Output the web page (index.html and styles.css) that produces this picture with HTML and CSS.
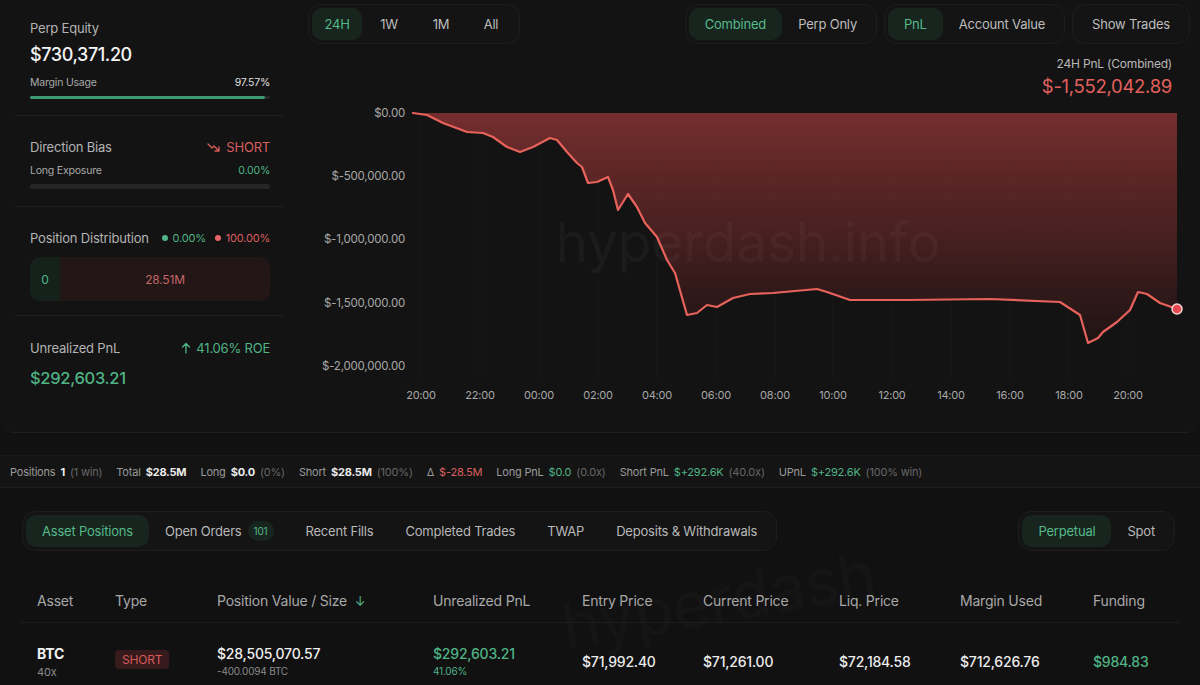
FILE: index.html
```html
<!DOCTYPE html>
<html>
<head>
<meta charset="utf-8">
<link rel="stylesheet" href="styles.css">
</head>
<body>
<div class="top">
  <div class="left">
    <div class="sec s1">
      <div class="lbl">Perp Equity</div>
      <div class="big">$730,371.20</div>
      <div class="row small mt9"><span>Margin Usage</span><span class="white">97.57%</span></div>
      <div class="bar thin"><div class="fill" style="width:98%"></div></div>
    </div>
    <div class="sec s2">
      <div class="row"><span class="lbl">Direction Bias</span><span class="red dir"><svg width="14" height="10" viewBox="0 0 14 10"><path d="M1 2 L5 6 L7 4 L12 9 M8 9 H12 V5" fill="none" stroke="#d45a5a" stroke-width="1.4" stroke-linecap="round" stroke-linejoin="round"/></svg> SHORT</span></div>
      <div class="row small mt9"><span>Long Exposure</span><span class="green">0.00%</span></div>
      <div class="bar thick"></div>
    </div>
    <div class="sec s3">
      <div class="row"><span class="lbl">Position Distribution</span><span class="legend"><i class="dot g"></i><span class="green">0.00%</span><i class="dot r"></i><span class="red">100.00%</span></span></div>
      <div class="dist"><div class="dl">0</div><div class="dr">28.51M</div></div>
    </div>
    <div class="sec s4">
      <div class="row"><span class="lbl">Unrealized PnL</span><span class="green roe"><svg width="10" height="12" viewBox="0 0 10 12"><path d="M5 11 V1.5 M1.5 5 L5 1.5 L8.5 5" fill="none" stroke="#4fb386" stroke-width="1.3" stroke-linecap="round" stroke-linejoin="round"/></svg> 41.06% ROE</span></div>
      <div class="upnl">$292,603.21</div>
    </div>
  </div>
  <div class="chartcol">
    <div class="toolbar">
      <div class="seg">
        <span class="it on w50">24H</span><span class="it w55">1W</span><span class="it w50">1M</span><span class="it w50">All</span>
      </div>
      <div class="rightgroups">
        <div class="seg"><span class="it on">Combined</span><span class="it">Perp Only</span></div>
        <div class="seg"><span class="it on">PnL</span><span class="it">Account Value</span></div>
        <div class="seg"><span class="it">Show Trades</span></div>
      </div>
    </div>
    <div class="summary">
      <div class="sumlbl">24H PnL (Combined)</div>
      <div class="sumval">$-1,552,042.89</div>
    </div>
    <svg class="chart" width="900" height="310" viewBox="0 0 900 310">
      <defs>
        <linearGradient id="gf" x1="0" y1="0" x2="0" y2="1">
          <stop offset="0" stop-color="#7a2f2f" stop-opacity="0.95"/>
          <stop offset="0.6" stop-color="#4a2020" stop-opacity="0.85"/>
          <stop offset="1" stop-color="#2a1515" stop-opacity="0.6"/>
        </linearGradient>
      </defs>
      <g stroke="#ffffff" stroke-opacity="0.025" stroke-width="1">
        <line x1="121" y1="13" x2="121" y2="280"/><line x1="180" y1="13" x2="180" y2="280"/><line x1="239" y1="13" x2="239" y2="280"/><line x1="298" y1="13" x2="298" y2="280"/><line x1="357" y1="13" x2="357" y2="280"/><line x1="416" y1="13" x2="416" y2="280"/><line x1="475" y1="13" x2="475" y2="280"/><line x1="533" y1="13" x2="533" y2="280"/><line x1="592" y1="13" x2="592" y2="280"/><line x1="651" y1="13" x2="651" y2="280"/><line x1="710" y1="13" x2="710" y2="280"/><line x1="769" y1="13" x2="769" y2="280"/><line x1="828" y1="13" x2="828" y2="280"/>
      </g>
      <path fill="url(#gf)" d="M113,13 L127,15 L143,23 L167,32 L183,33 L193,37 L207,47 L220,52 L233,47 L250,38 L257,40 L267,52 L277,63 L282,67 L288,83 L297,82 L308,77 L313,90 L318,110 L328,94 L337,107 L345,123 L357,137 L367,160 L375,173 L387,215 L397,213 L407,205 L417,207 L433,198 L450,194 L473,193 L517,189 L527,192 L550,200 L607,200 L690,199 L760,202 L780,215 L788,243 L798,238 L803,232 L817,222 L830,210 L838,192 L847,194 L860,203 L877,209 L877,13 Z"/>
      <text class="wm" x="448" y="162" text-anchor="middle">hyperdash.info</text>
      <path fill="none" stroke="#e8625c" stroke-width="2.2" stroke-linejoin="round" stroke-linecap="round" d="M113,13 L127,15 L143,23 L167,32 L183,33 L193,37 L207,47 L220,52 L233,47 L250,38 L257,40 L267,52 L277,63 L282,67 L288,83 L297,82 L308,77 L313,90 L318,110 L328,94 L337,107 L345,123 L357,137 L367,160 L375,173 L387,215 L397,213 L407,205 L417,207 L433,198 L450,194 L473,193 L517,189 L527,192 L550,200 L607,200 L690,199 L760,202 L780,215 L788,243 L798,238 L803,232 L817,222 L830,210 L838,192 L847,194 L860,203 L877,209"/>
      <circle cx="877" cy="209" r="5" fill="#e5484d" stroke="#f5d6d6" stroke-width="1.5"/>
      <g class="ylab" text-anchor="end">
        <text x="105" y="17">$0.00</text>
        <text x="105" y="80">$-500,000.00</text>
        <text x="105" y="143">$-1,000,000.00</text>
        <text x="105" y="207">$-1,500,000.00</text>
        <text x="105" y="270">$-2,000,000.00</text>
      </g>
      <g class="xlab" text-anchor="middle">
        <text x="121" y="299">20:00</text><text x="180" y="299">22:00</text><text x="239" y="299">00:00</text><text x="298" y="299">02:00</text><text x="357" y="299">04:00</text><text x="416" y="299">06:00</text><text x="475" y="299">08:00</text><text x="533" y="299">10:00</text><text x="592" y="299">12:00</text><text x="651" y="299">14:00</text><text x="710" y="299">16:00</text><text x="769" y="299">18:00</text><text x="828" y="299">20:00</text>
      </g>
    </svg>
  </div>
</div>

<div class="stats">
  <span class="st"><span class="k">Positions</span><b>1</b><span class="p">(1 win)</span></span>
  <span class="st"><span class="k">Total</span><b>$28.5M</b></span>
  <span class="st"><span class="k">Long</span><b>$0.0</b><span class="p">(0%)</span></span>
  <span class="st"><span class="k">Short</span><b>$28.5M</b><span class="p">(100%)</span></span>
  <span class="st"><span class="k">Δ</span><span class="red">$-28.5M</span></span>
  <span class="st"><span class="k">Long PnL</span><span class="green">$0.0</span><span class="p">(0.0x)</span></span>
  <span class="st"><span class="k">Short PnL</span><span class="green">$+292.6K</span><span class="p">(40.0x)</span></span>
  <span class="st"><span class="k">UPnL</span><span class="green">$+292.6K</span><span class="p">(100% win)</span></span>
</div>

<div class="lower">
  <div class="tabsrow">
    <div class="seg tabs">
      <span class="it on">Asset Positions</span>
      <span class="it">Open Orders <span class="badge">101</span></span>
      <span class="it">Recent Fills</span>
      <span class="it">Completed Trades</span>
      <span class="it">TWAP</span>
      <span class="it">Deposits &amp; Withdrawals</span>
    </div>
    <div class="seg tabs">
      <span class="it on">Perpetual</span>
      <span class="it">Spot</span>
    </div>
  </div>
  <div class="table">
    <div class="thead">
      <span>Asset</span><span>Type</span><span>Position Value / Size <span class="green arrow">↓</span></span><span>Unrealized PnL</span><span>Entry Price</span><span>Current Price</span><span>Liq. Price</span><span>Margin Used</span><span>Funding</span>
    </div>
    <div class="trow">
      <div class="cell"><div class="asset">BTC</div><div class="sub">40x</div></div>
      <div class="cell"><span class="tag">SHORT</span></div>
      <div class="cell"><div class="val">$28,505,070.57</div><div class="sub2">-400.0094 BTC</div></div>
      <div class="cell"><div class="val green">$292,603.21</div><div class="sub2 green">41.06%</div></div>
      <div class="cell mid">$71,992.40</div>
      <div class="cell mid">$71,261.00</div>
      <div class="cell mid">$72,184.58</div>
      <div class="cell mid">$712,626.76</div>
      <div class="cell mid green">$984.83</div>
    </div>
  </div>
  <div class="wm2">hyperdash</div>
</div>
</body>
</html>
```

FILE: styles.css
```css
* { box-sizing: border-box; }
html, body { margin: 0; padding: 0; }
body {
  width: 1200px;
  height: 685px;
  overflow: hidden;
  background: #111111;
  color: #e8e8e8;
  font-family: Inter, "Liberation Sans", sans-serif;
  letter-spacing: -0.2px;
}
.green { color: #4fb386; }
.red { color: #d85f5f; }
.white { color: #e0e0e0; }

.top {
  display: flex;
  height: 433px;
  background: #131313;
  border-bottom: 1px solid #1e1e1e;
  border-radius: 0 0 14px 14px;
}
.left { width: 268px; margin-left: 15px; flex: none; }
.sec { padding: 0 13px 0 15px; border-bottom: 1px solid #1f1f1f; }
.sec:last-child { border-bottom: none; }
.s1 { height: 116px; padding-top: 20px; }
.s2 { height: 91px; padding-top: 23px; }
.s3 { height: 109px; padding-top: 23px; }
.s4 { padding-top: 24px; }
.lbl { font-size: 13px; line-height: 16px; color: #b4b4b4; }
.big { font-size: 18px; line-height: 24px; font-weight: 500; color: #f4f4f4; margin-top: 7px; letter-spacing: -0.4px; }
.row { display: flex; justify-content: space-between; align-items: center; }
.small { font-size: 10.5px; line-height: 14px; color: #a8a8a8; }
.mt9 { margin-top: 9px; }
.bar { background: #262626; border-radius: 3px; margin-top: 6px; }
.bar.thin { height: 3px; }
.bar.thick { height: 5px; }
.fill { height: 100%; background: #3f9a73; border-radius: 3px; }
.dir { font-size: 13px; line-height: 16px; display: flex; align-items: center; gap: 5px; }
.legend { display: flex; align-items: center; gap: 5px; font-size: 11px; }
.dot { width: 6px; height: 6px; border-radius: 50%; display: inline-block; }
.dot.g { background: #4fb386; }
.dot.r { background: #e5656a; margin-left: 4px; }
.dist {
  margin-top: 11px;
  height: 44px;
  display: flex;
  border-radius: 10px;
  overflow: hidden;
  background: #1f1415;
  font-size: 12px;
}
.dl { width: 30px; background: #15211b; color: #4fb386; display: flex; align-items: center; justify-content: center; }
.dr { flex: 1; display: flex; align-items: center; justify-content: center; color: #c46767; background: #221617; }
.roe { font-size: 13px; line-height: 16px; display: flex; align-items: center; gap: 5px; }
.upnl { margin-top: 11px; font-size: 16.5px; line-height: 22px; color: #4fb386; font-weight: 500; letter-spacing: -0.3px; }

.chartcol { flex: 1; position: relative; margin-left: 17px; }
.toolbar { display: flex; justify-content: space-between; padding: 4px 10px 0 8px; }
.rightgroups { display: flex; gap: 7px; }
.seg {
  display: flex;
  align-items: center;
  height: 40px;
  padding: 3px;
  border: 1px solid #1d1d1d;
  background: #141414;
  border-radius: 13px;
}
.it {
  height: 32px;
  display: flex;
  align-items: center;
  justify-content: center;
  padding: 0 16px;
  font-size: 13px;
  color: #bdbdbd;
  border-radius: 10px;
  white-space: nowrap;
}
.it.on { background: #17251e; color: #55b98a; }
.w50 { width: 50px; padding: 0; }
.w55 { width: 54px; padding: 0; }
.summary { text-align: right; padding-right: 28px; margin-top: 12px; height: 44px; }
.sumlbl { font-size: 12px; line-height: 15px; color: #b8b8b8; }
.sumval { font-size: 18.5px; line-height: 26px; color: #e0605d; margin-top: 2px; letter-spacing: -0.3px; }
.chart { display: block; margin-left: 0; }
.ylab text, .xlab text { font-family: Inter, "Liberation Sans", sans-serif; font-size: 11px; fill: #a8a8a8; letter-spacing: -0.2px; }
.ylab text { font-size: 11.5px; }
.wm { font-family: Inter, "Liberation Sans", sans-serif; font-size: 55px; fill: #ffffff; fill-opacity: 0.035; }

.stats {
  margin-top: 22px;
  height: 33px;
  display: flex;
  align-items: center;
  gap: 14px;
  padding-left: 10px;
  background: #141414;
  border-top: 1px solid #1a1a1a;
  border-bottom: 1px solid #1f1f1f;
  font-size: 11px;
}
.st { display: flex; gap: 5px; align-items: baseline; }
.st .k { color: #9a9a9a; }
.st b { color: #ececec; font-weight: 700; }
.st .p { color: #666; }

.lower { position: relative; height: 196px; overflow: hidden; }
.tabsrow { display: flex; justify-content: space-between; padding: 23px 25px 0 22px; }
.tabs .it { color: #b8b8b8; }
.tabs .it.on { color: #55b98a; }
.badge {
  display: inline-flex;
  align-items: center;
  justify-content: center;
  width: 26px; height: 20px;
  border-radius: 10px;
  background: #17251e;
  color: #55b98a;
  font-size: 10px;
  margin-left: 6px;
}
.table { padding: 0 0 0 20px; margin-top: 28px; position: relative; z-index: 1; }
.thead, .trow {
  display: grid;
  grid-template-columns: 78px 102px 216px 149px 121px 136px 121px 133px 1fr;
}
.thead {
  padding-left: 17px;
  height: 44px;
  align-items: center;
  font-size: 14px;
  color: #a8a8a8;
  border-bottom: 1px solid #1c1c1c;
  margin-right: 20px;
}
.arrow { margin-left: 4px; font-size: 13px; }
.trow { padding-left: 17px; padding-top: 22px; align-items: start; }
.cell { font-size: 14px; }
.asset { font-weight: 700; color: #f2f2f2; font-size: 14px; line-height: 18px; }
.sub { font-size: 11px; color: #8a8a8a; margin-top: 2px; }
.val { font-size: 14px; line-height: 18px; color: #f0f0f0; font-weight: 500; }
.val.green { color: #4fb386; }
.sub2 { font-size: 10px; color: #8a8a8a; margin-top: 2px; }
.sub2.green { color: #4fb386; }
.mid { padding-top: 8px; font-weight: 500; color: #ececec; }
.mid.green { color: #4fb386; }
.tag {
  display: inline-block;
  margin-top: 5px;
  padding: 2px 7px;
  background: #361a1c;
  color: #d55a5a;
  font-size: 12px;
  border-radius: 4px;
}
.wm2 {
  position: absolute;
  left: 560px;
  top: 80px;
  font-size: 64px;
  line-height: 1;
  color: #ffffff;
  opacity: 0.015;
  transform: rotate(-10deg);
  pointer-events: none;
}
```
